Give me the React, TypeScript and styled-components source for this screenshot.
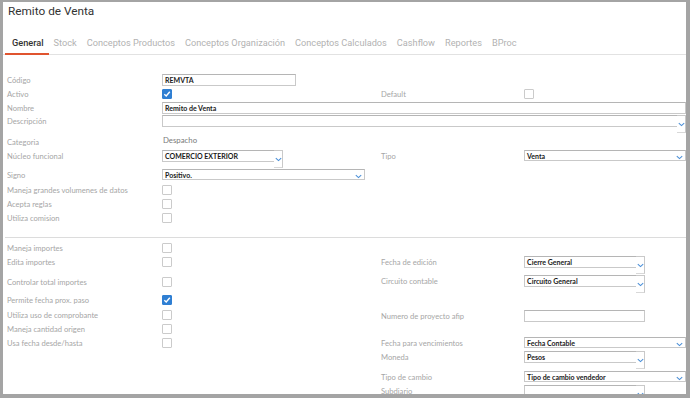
import styled, { createGlobalStyle } from 'styled-components';

const GlobalStyle = createGlobalStyle`
  body {
    margin: 0;
    background: #fff;
    font-family: Lato, "Open Sans", sans-serif;
  }
`;

const Chevron = () => (
  <svg width="7" height="5" viewBox="0 0 7 5">
    <path d="M0.8 1.2 L3.5 3.6 L6.2 1.2" fill="none" stroke="#4a8fd8" strokeWidth="1.1" />
  </svg>
);

const Check = () => (
  <svg width="8" height="8" viewBox="0 0 8 8">
    <path d="M1.3 4.3 L3.2 6 L6.8 1.8" fill="none" stroke="#fff" strokeWidth="1.4" />
  </svg>
);

const Frame = styled.div`
  width: 690px;
  height: 398px;
  box-sizing: border-box;
  border-style: solid;
  border-color: #a4a4a4;
  border-width: 2px 4px 4px 3px;
  background: #fff;
  overflow: hidden;
`;

const Title = styled.h1`
  margin: 0;
  padding: 0 0 0 5px;
  font-family: Roboto, "Liberation Sans", sans-serif;
  font-weight: 400;
  font-size: 11.8px;
  line-height: 18px;
  color: #333;
`;

const TabBar = styled.div`
  display: flex;
  margin-top: 16px;
  padding-left: 2px;
  border-bottom: 1px solid #e2e2e2;
`;

const Tab = styled.div<{ $active?: boolean }>`
  padding: 0 5px 3px;
  margin-bottom: -1px;
  font-family: Roboto, "Liberation Sans", sans-serif;
  font-size: 9.2px;
  line-height: 14px;
  font-weight: ${(p) => (p.$active ? 500 : 400)};
  color: ${(p) => (p.$active ? '#333' : '#b2b2b2')};
  border-bottom: 2px solid ${(p) => (p.$active ? '#e0542f' : 'transparent')};

  &:first-child {
    padding-left: 7px;
  }
`;

const Section = styled.div<{ $pt: number }>`
  padding-top: ${(p) => p.$pt}px;
`;

const Row = styled.div<{ $h: number; $cols: string }>`
  display: grid;
  grid-template-columns: ${(p) => p.$cols};
  height: ${(p) => p.$h}px;
  align-items: start;
`;

const Label = styled.div`
  padding-left: 4px;
  font-size: 7.6px;
  line-height: 12px;
  color: #a6a6a6;
  white-space: nowrap;
`;

const RightLabel = styled(Label)`
  padding-left: 0;
`;

const Value = styled.div<{ $span?: boolean }>`
  grid-column: ${(p) => (p.$span ? '2 / 5' : 'auto')};
  display: flex;
`;

const Plain = styled.div`
  margin-top: -2px;
  padding-left: 1px;
  font-size: 7.8px;
  line-height: 12px;
  color: #7a7a7a;
`;

const Input = styled.div<{ $w?: number }>`
  width: ${(p) => (p.$w ? `${p.$w}px` : '100%')};
  height: 12px;
  box-sizing: border-box;
  border: 1px solid #c9c9c9;
  border-top-color: #b5b5b5;
  padding-left: 2px;
  font-size: 7px;
  font-weight: 700;
  line-height: 10px;
  color: #1a1a1a;
  white-space: nowrap;
  overflow: hidden;
`;

const Select = styled(Input)`
  display: flex;
  align-items: center;
  justify-content: space-between;
  height: 11px;
  padding-right: 2px;

  & svg {
    margin-top: 3px;
  }
`;

const Combo = styled.div<{ $w?: number }>`
  display: flex;
  width: ${(p) => (p.$w ? `${p.$w}px` : '100%')};
`;

const ComboField = styled(Input)`
  flex: 1;
  border-right: 0;
`;

const ComboButton = styled.div`
  width: 9px;
  height: 18px;
  box-sizing: border-box;
  border: 1px solid #c9c9c9;
  border-left: 0;
  border-bottom-color: #d8d8d8;
  display: flex;
  justify-content: center;
  padding-top: 6px;
`;

const Box = styled.div<{ $checked?: boolean }>`
  width: 10px;
  height: 10px;
  margin-top: 1px;
  box-sizing: border-box;
  border: 1px solid ${(p) => (p.$checked ? '#2f7fd3' : '#cbcbcb')};
  border-radius: 1px;
  background: ${(p) => (p.$checked ? '#2f7fd3' : '#fff')};
  display: flex;
  align-items: center;
  justify-content: center;
`;

const Separator = styled.hr`
  margin: 11px 0 0 2px;
  border: 0;
  border-top: 1px solid #dcdcdc;
`;

const Columns = styled.div`
  display: flex;
`;

const Column = styled.div<{ $w?: number; $pt: number }>`
  width: ${(p) => (p.$w ? `${p.$w}px` : 'auto')};
  flex: ${(p) => (p.$w ? 'none' : 1)};
  padding-top: ${(p) => p.$pt}px;
`;

const FOUR = '159px 219px 143px 1fr';
const LEFT = '159px 219px';
const RIGHT = '143px 1fr';

const Checkbox = ({ checked }: { checked?: boolean }) => (
  <Box $checked={checked}>{checked && <Check />}</Box>
);

const ComboSelect = ({ text, w }: { text: string; w?: number }) => (
  <Combo $w={w}>
    <ComboField>{text}</ComboField>
    <ComboButton>
      <Chevron />
    </ComboButton>
  </Combo>
);

const WideSelect = ({ text, w }: { text: string; w?: number }) => (
  <Select $w={w}>
    <span>{text}</span>
    <Chevron />
  </Select>
);

const tabs = [
  'General',
  'Stock',
  'Conceptos Productos',
  'Conceptos Organización',
  'Conceptos Calculados',
  'Cashflow',
  'Reportes',
  'BProc',
];

const leftChecks: { label: string; h: number; checked?: boolean }[] = [
  { label: 'Maneja importes', h: 14 },
  { label: 'Edita importes', h: 20 },
  { label: 'Controlar total importes', h: 18 },
  { label: 'Permite fecha prox. paso', h: 15, checked: true },
  { label: 'Utiliza uso de comprobante', h: 14 },
  { label: 'Maneja cantidad origen', h: 14 },
  { label: 'Usa fecha desde/hasta', h: 14 },
];

export default function App() {
  return (
    <>
      <GlobalStyle />
      <Frame>
        <Title>Remito de Venta</Title>
        <TabBar>
          {tabs.map((t, i) => (
            <Tab key={t} $active={i === 0}>
              {t}
            </Tab>
          ))}
        </TabBar>

        <Section $pt={19}>
          <Row $h={14} $cols={FOUR}>
            <Label>Código</Label>
            <Value>
              <Input $w={134}>REMVTA</Input>
            </Value>
          </Row>
          <Row $h={14} $cols={FOUR}>
            <Label>Activo</Label>
            <Value>
              <Checkbox checked />
            </Value>
            <RightLabel>Default</RightLabel>
            <Value>
              <Checkbox />
            </Value>
          </Row>
          <Row $h={13} $cols={FOUR}>
            <Label>Nombre</Label>
            <Value $span>
              <Input>Remito de Venta</Input>
            </Value>
          </Row>
          <Row $h={21} $cols={FOUR}>
            <Label>Descripción</Label>
            <Value $span>
              <ComboSelect text="" />
            </Value>
          </Row>
          <Row $h={14} $cols={FOUR}>
            <Label>Categoria</Label>
            <Value>
              <Plain>Despacho</Plain>
            </Value>
          </Row>
          <Row $h={19} $cols={FOUR}>
            <Label>Núcleo funcional</Label>
            <Value>
              <ComboSelect text="COMERCIO EXTERIOR" w={121} />
            </Value>
            <RightLabel>Tipo</RightLabel>
            <Value>
              <WideSelect text="Venta" />
            </Value>
          </Row>
          <Row $h={15} $cols={FOUR}>
            <Label>Signo</Label>
            <Value>
              <WideSelect text="Positivo." w={203} />
            </Value>
          </Row>
          <Row $h={14} $cols={FOUR}>
            <Label>Maneja grandes volumenes de datos</Label>
            <Value>
              <Checkbox />
            </Value>
          </Row>
          <Row $h={14} $cols={FOUR}>
            <Label>Acepta reglas</Label>
            <Value>
              <Checkbox />
            </Value>
          </Row>
          <Row $h={14} $cols={FOUR}>
            <Label>Utiliza comision</Label>
            <Value>
              <Checkbox />
            </Value>
          </Row>
        </Section>

        <Separator />

        <Columns>
          <Column $w={378} $pt={4}>
            {leftChecks.map((c) => (
              <Row key={c.label} $h={c.h} $cols={LEFT}>
                <Label>{c.label}</Label>
                <Value>
                  <Checkbox checked={c.checked} />
                </Value>
              </Row>
            ))}
          </Column>
          <Column $pt={18}>
            <Row $h={19} $cols={RIGHT}>
              <RightLabel>Fecha de edición</RightLabel>
              <Value>
                <ComboSelect text="Cierre General" w={121} />
              </Value>
            </Row>
            <Row $h={35} $cols={RIGHT}>
              <RightLabel>Circuito contable</RightLabel>
              <Value>
                <ComboSelect text="Circuito General" w={121} />
              </Value>
            </Row>
            <Row $h={27} $cols={RIGHT}>
              <RightLabel>Numero de proyecto afip</RightLabel>
              <Value>
                <Input $w={121} />
              </Value>
            </Row>
            <Row $h={14} $cols={RIGHT}>
              <RightLabel>Fecha para vencimientos</RightLabel>
              <Value>
                <WideSelect text="Fecha Contable" />
              </Value>
            </Row>
            <Row $h={20} $cols={RIGHT}>
              <RightLabel>Moneda</RightLabel>
              <Value>
                <ComboSelect text="Pesos" w={121} />
              </Value>
            </Row>
            <Row $h={14} $cols={RIGHT}>
              <RightLabel>Tipo de cambio</RightLabel>
              <Value>
                <WideSelect text="Tipo de cambio vendedor" />
              </Value>
            </Row>
            <Row $h={20} $cols={RIGHT}>
              <RightLabel>Subdiario</RightLabel>
              <Value>
                <ComboSelect text="" w={121} />
              </Value>
            </Row>
          </Column>
        </Columns>
      </Frame>
    </>
  );
}
